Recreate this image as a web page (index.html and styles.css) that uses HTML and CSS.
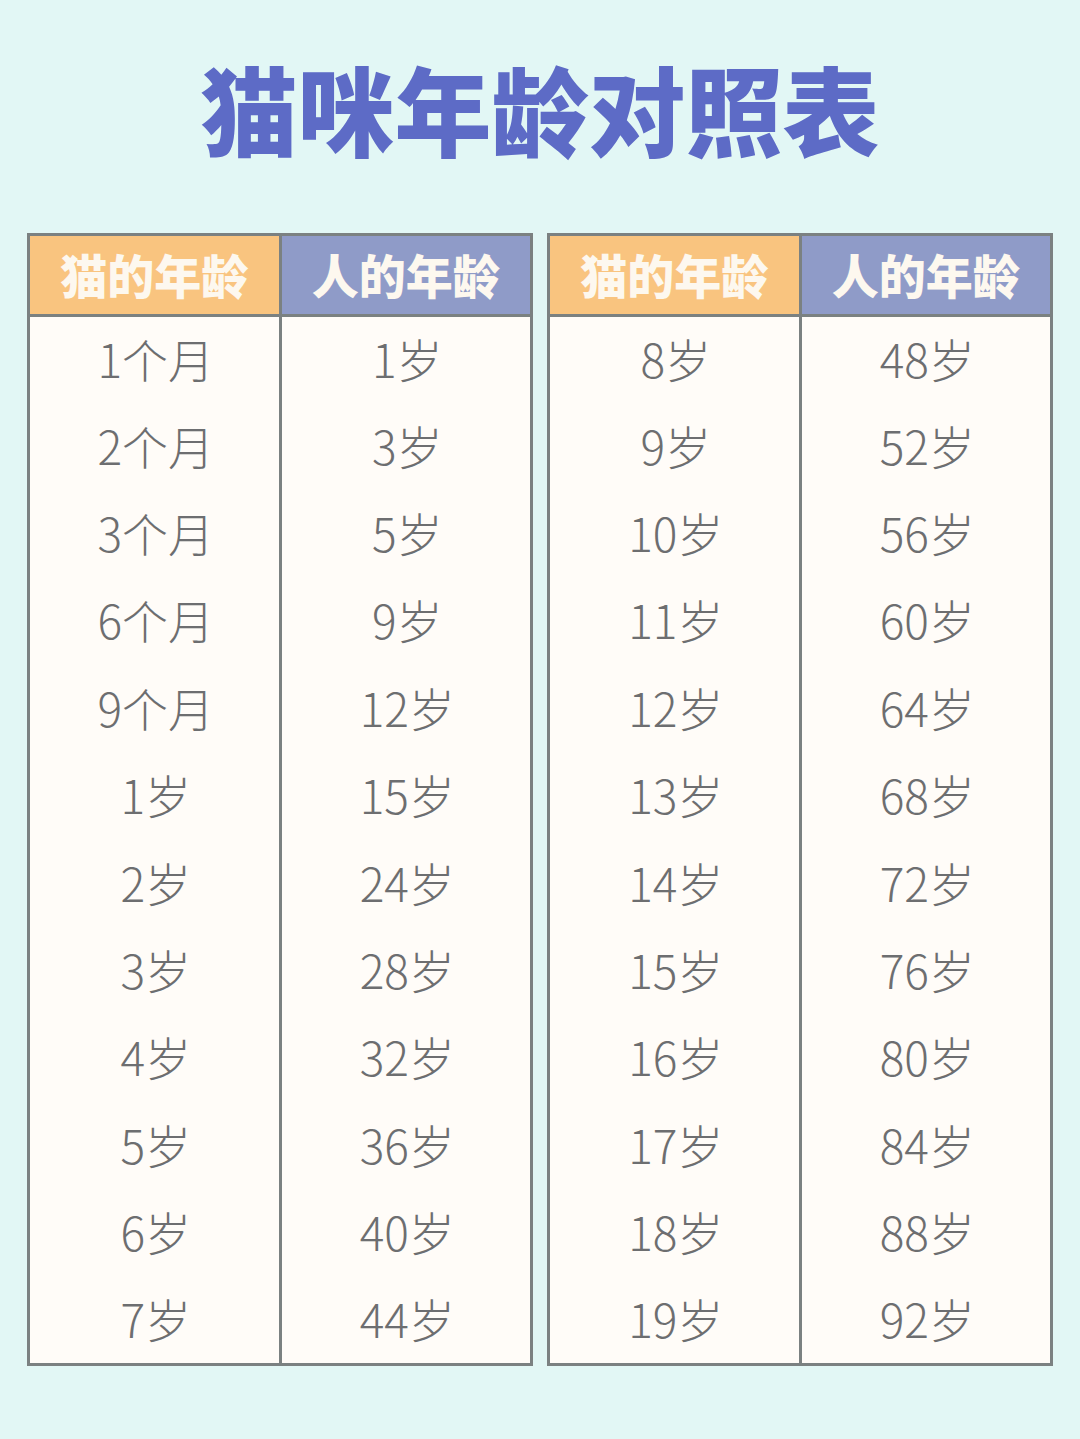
FILE: index.html
```html
<!DOCTYPE html>
<html lang="zh">
<head>
<meta charset="utf-8">
<title>猫咪年龄对照表</title>
<link rel="stylesheet" href="styles.css">
</head>
<body>
<div class="page">
  <h1 class="title">猫咪年龄对照表</h1>
  <div class="tables">
    <table class="age">
      <thead><tr><th class="cat">猫的年龄</th><th class="human">人的年龄</th></tr></thead>
      <tbody>
        <tr><td>1个月</td><td>1岁</td></tr>
        <tr><td>2个月</td><td>3岁</td></tr>
        <tr><td>3个月</td><td>5岁</td></tr>
        <tr><td>6个月</td><td>9岁</td></tr>
        <tr><td>9个月</td><td>12岁</td></tr>
        <tr><td>1岁</td><td>15岁</td></tr>
        <tr><td>2岁</td><td>24岁</td></tr>
        <tr><td>3岁</td><td>28岁</td></tr>
        <tr><td>4岁</td><td>32岁</td></tr>
        <tr><td>5岁</td><td>36岁</td></tr>
        <tr><td>6岁</td><td>40岁</td></tr>
        <tr><td>7岁</td><td>44岁</td></tr>
      </tbody>
    </table>
    <table class="age">
      <thead><tr><th class="cat">猫的年龄</th><th class="human">人的年龄</th></tr></thead>
      <tbody>
        <tr><td>8岁</td><td>48岁</td></tr>
        <tr><td>9岁</td><td>52岁</td></tr>
        <tr><td>10岁</td><td>56岁</td></tr>
        <tr><td>11岁</td><td>60岁</td></tr>
        <tr><td>12岁</td><td>64岁</td></tr>
        <tr><td>13岁</td><td>68岁</td></tr>
        <tr><td>14岁</td><td>72岁</td></tr>
        <tr><td>15岁</td><td>76岁</td></tr>
        <tr><td>16岁</td><td>80岁</td></tr>
        <tr><td>17岁</td><td>84岁</td></tr>
        <tr><td>18岁</td><td>88岁</td></tr>
        <tr><td>19岁</td><td>92岁</td></tr>
      </tbody>
    </table>
  </div>
</div>
</body>
</html>
```
FILE: styles.css
```css
html, body {
  margin: 0;
  padding: 0;
  background: #e2f7f5;
}
.page {
  width: 1080px;
  height: 1439px;
  box-sizing: border-box;
  padding: 58px 0 0 27px;
  font-family: "Noto Sans CJK SC", "Noto Sans", sans-serif;
}
.title {
  margin: 0 27px 0 0;
  text-align: center;
  font-size: 97px;
  line-height: 97px;
  font-weight: 900;
  color: #5d6bc6;
  letter-spacing: 0;
}
.tables {
  display: flex;
  gap: 14px;
  margin-top: 78px;
}
.age {
  border-collapse: collapse;
  width: 506px;
  table-layout: fixed;
  background: #fffcf8;
}
.age th, .age td {
  border: 3px solid #7b8181;
  text-align: center;
  padding: 0;
}
.age th {
  height: 75px;
  font-size: 47px;
  font-weight: 900;
  color: #fdf8ef;
  line-height: 1;
  padding-bottom: 3px;
}
.age th.cat { background: #f9c47f; }
.age th.human { background: #8f9bc8; }
.age tbody tr {
  height: 87.4px;
}
.age td {
  font-size: 46px;
  font-weight: 300;
  color: #6d6e70;
  line-height: 1;
  padding: 0 0 4px 3px;
  border-top: none;
  border-bottom: none;
}
.age tbody tr:last-child td {
  border-bottom: 3px solid #7b8181;
}
```
